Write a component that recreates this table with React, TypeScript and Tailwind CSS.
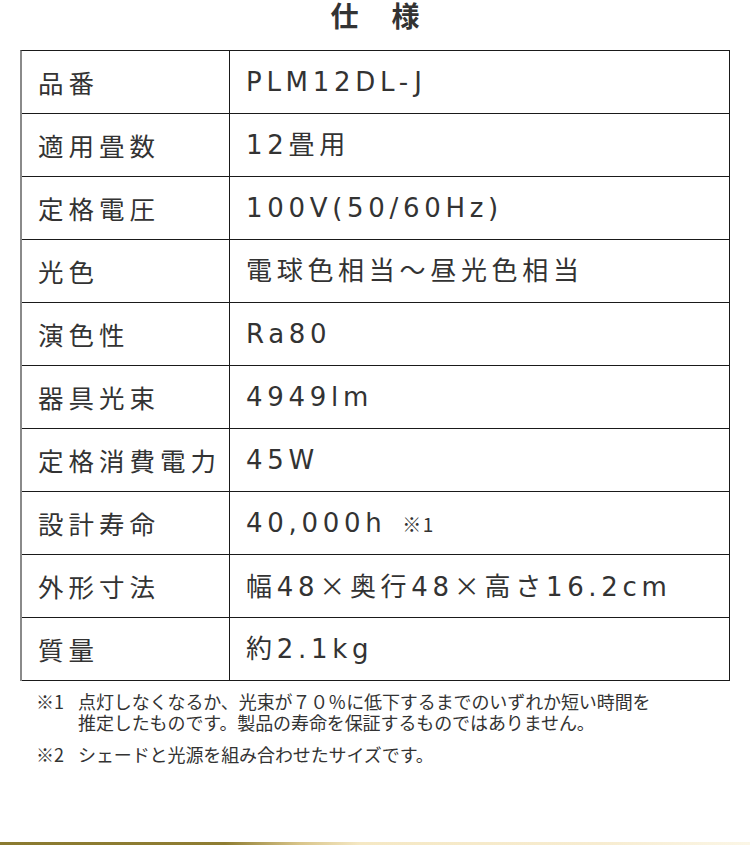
const X = () => <span className="font-['Noto_Sans_CJK_JP',sans-serif]">×</span>;

const specs: [string, React.ReactNode][] = [
  ['品番', 'PLM12DL-J'],
  ['適用畳数', '12畳用'],
  ['定格電圧', '100V(50/60Hz)'],
  ['光色', '電球色相当～昼光色相当'],
  ['演色性', 'Ra80'],
  ['器具光束', '4949lm'],
  ['定格消費電力', '45W'],
  [
    '設計寿命',
    <>
      40,000h{' '}
      <span className="ml-[3px] text-[19px] tracking-[1.5px] font-['Noto_Sans_CJK_JP',sans-serif]">※1</span>
    </>,
  ],
  [
    '外形寸法',
    <>
      幅48<X />奥行48<X />高さ16.2cm
    </>,
  ],
  ['質量', '約2.1kg'],
];

export default function App() {
  return (
    <div className="min-h-[845px] bg-white flex flex-col text-[#333] font-['Noto_Sans_CJK_JP','Noto_Sans',sans-serif]">
      {/* Title */}
      <div className="h-[50px] flex justify-center gap-[33px] text-[28px] font-bold leading-[31px]">
        <span>仕</span>
        <span>様</span>
      </div>

      {/* Spec table */}
      <div className="mx-[20px] border-t-[1.5px] border-r-[1.5px] border-[#1a1a1a] border-l-2 border-l-[#8a8a8a]">
        {specs.map(([label, value]) => (
          <div
            key={label}
            className="grid grid-cols-[208px_1fr] h-[63px] border-b-[1.5px] border-[#1a1a1a]"
          >
            <div className="flex items-center pl-[16px] border-r-[1.5px] border-[#1a1a1a] text-[25.5px] tracking-[5px]">
              {label}
            </div>
            <div className="flex items-center pl-[16px] text-[26px] tracking-[4.7px] font-['DejaVu_Sans','Noto_Sans_CJK_JP',sans-serif]">
              <span>{value}</span>
            </div>
          </div>
        ))}
      </div>

      {/* Notes */}
      <div className="pl-[36px] pt-[10px] text-[18px] leading-[21px] tracking-[-0.1px] text-[#333]">
        <div className="flex">
          <span className="w-[42px] shrink-0">※1</span>
          <span>
            点灯しなくなるか、光束が７０％に低下するまでのいずれか短い時間を
            <br />
            推定したものです。製品の寿命を保証するものではありません。
          </span>
        </div>
        <div className="flex mt-[11px]">
          <span className="w-[42px] shrink-0">※2</span>
          <span>シェードと光源を組み合わせたサイズです。</span>
        </div>
      </div>

      <div className="flex-1" />
      <div className="h-[3px] bg-[linear-gradient(to_right,#8a7a30_0%,#8f7d32_30%,#d9c58a_40%,#f5e8c4_48%,#f7ecd0_80%,#fbf6e6_100%)]" />
    </div>
  );
}
